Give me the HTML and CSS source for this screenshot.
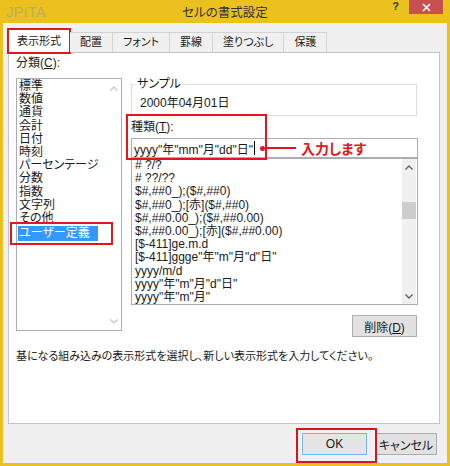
FILE: index.html
```html
<!DOCTYPE html>
<html lang="ja">
<head>
    <meta charset="UTF-8">
    <title>セルの書式設定</title>
    <link rel="stylesheet" href="styles.css">
</head>
<body>
    <div class="window">
        <div class="titlebar">
            <span class="app-name">JPITA</span>
            <span class="title">セルの書式設定</span>
            <div class="title-btns">
                <span class="help">?</span>
                <span class="close">
                    <svg width="9" height="9" viewBox="0 0 9 9"><path d="M1 1L8 8M8 1L1 8" stroke="#fff" stroke-width="1.6"/></svg>
                </span>
            </div>
        </div>

        <div class="dialog">
            <div class="tabs">
                <div class="tab active">表示形式</div>
                <div class="tab">配置</div>
                <div class="tab">フォント</div>
                <div class="tab">罫線</div>
                <div class="tab">塗りつぶし</div>
                <div class="tab">保護</div>
            </div>

            <div class="panel">
                <div class="panel-cols">
                    <div class="col-left">
                        <div class="label">分類(<u>C</u>):</div>
                        <div class="listbox cat-list">
                            <ul class="items">
                                <li>標準</li>
                                <li>数値</li>
                                <li>通貨</li>
                                <li>会計</li>
                                <li>日付</li>
                                <li>時刻</li>
                                <li>パーセンテージ</li>
                                <li>分数</li>
                                <li>指数</li>
                                <li>文字列</li>
                                <li>その他</li>
                                <li class="selected">ユーザー定義</li>
                            </ul>
                            <div class="scrollbar plain">
                                <svg width="8" height="5" viewBox="0 0 8 5"><path d="M0.5 4.5L4 1L7.5 4.5" fill="none" stroke="#c4c4c4" stroke-width="1.2"/></svg>
                                <svg width="8" height="5" viewBox="0 0 8 5"><path d="M0.5 0.5L4 4L7.5 0.5" fill="none" stroke="#c4c4c4" stroke-width="1.2"/></svg>
                            </div>
                        </div>
                    </div>

                    <div class="col-right">
                        <fieldset class="sample">
                            <legend>サンプル</legend>
                            <div>2000年04月01日</div>
                        </fieldset>

                        <div class="type-field">
                            <div class="label">種類(<u>T</u>):</div>
                            <div class="type-input">
                                <span>yyyy"年"mm"月"dd"日"</span>
                                <span class="caret"></span>
                                <span class="callout">
                                    <span class="dot"></span>
                                    <span class="line"></span>
                                    <span class="callout-text">入力します</span>
                                </span>
                            </div>
                        </div>

                        <div class="listbox fmt-list">
                            <ul class="items">
                                <li># ?/?</li>
                                <li># ??/??</li>
                                <li>$#,##0_);($#,##0)</li>
                                <li>$#,##0_);[赤]($#,##0)</li>
                                <li>$#,##0.00_);($#,##0.00)</li>
                                <li>$#,##0.00_);[赤]($#,##0.00)</li>
                                <li>[$-411]ge.m.d</li>
                                <li>[$-411]ggge"年"m"月"d"日"</li>
                                <li>yyyy/m/d</li>
                                <li>yyyy"年"m"月"d"日"</li>
                                <li>yyyy"年"m"月"</li>
                            </ul>
                            <div class="scrollbar">
                                <div class="sb-btn">
                                    <svg width="8" height="5" viewBox="0 0 8 5"><path d="M0.5 4.5L4 1L7.5 4.5" fill="none" stroke="#606060" stroke-width="1.3"/></svg>
                                </div>
                                <div class="sb-track"><div class="sb-thumb"></div></div>
                                <div class="sb-btn">
                                    <svg width="8" height="5" viewBox="0 0 8 5"><path d="M0.5 0.5L4 4L7.5 0.5" fill="none" stroke="#606060" stroke-width="1.3"/></svg>
                                </div>
                            </div>
                        </div>

                        <button class="btn delete">削除(<u>D</u>)</button>
                    </div>
                </div>
                <p class="hint">基になる組み込みの表示形式を選択し、新しい表示形式を入力してください。</p>
            </div>

            <div class="buttons">
                <button class="btn ok">OK</button>
                <button class="btn cancel">キャンセル</button>
            </div>
        </div>
    </div>
</body>
</html>
```

FILE: styles.css
```css
* {
    box-sizing: border-box;
}
body {
    margin: 0;
    font-family: "Liberation Sans", "Noto Sans CJK JP", sans-serif;
    font-size: 12px;
    font-feature-settings: "palt";
    color: #1a1a1a;
    background: #eac11d;
}
.window {
    width: 450px;
    height: 466px;
    display: flex;
    flex-direction: column;
    background: #eac11d;
}
.titlebar {
    height: 23px;
    display: grid;
    grid-template-columns: 1fr auto 1fr;
    align-items: center;
}
.app-name {
    padding-left: 6px;
    font-size: 15px;
    color: #c2ab62;
}
.title {
    font-size: 12.5px;
    color: #333;
}
.title-btns {
    display: flex;
    justify-content: flex-end;
    align-self: start;
    padding-right: 7px;
}
.help {
    font-weight: bold;
    font-size: 11px;
    line-height: 12px;
    color: #333;
    margin-right: 10px;
}
.close {
    width: 34px;
    height: 14px;
    background: #c75050;
    display: flex;
    align-items: center;
    justify-content: center;
}

.dialog {
    flex: 1;
    margin: 0 3px 3px;
    background: #f0f0f0;
    padding: 6px 7px 0 5px;
    display: flex;
    flex-direction: column;
}

/* tabs */
.tabs {
    display: flex;
    align-items: flex-end;
    height: 24px;
    margin-bottom: -1px;
    position: relative;
    z-index: 1;
}
.tab {
    height: 20px;
    margin-bottom: 1px;
    padding: 0 10px;
    font-size: 11px;
    line-height: 19px;
    border: 1px solid #d4d4d4;
    border-bottom: none;
    border-left: none;
    background: #f0f0f0;
}
.tab.active {
    height: 24px;
    margin-bottom: 0;
    line-height: 22px;
    padding: 0 8px;
    background: #fff;
    border: 1px solid #c8c8c8;
    border-bottom: none;
    outline: 2px solid #e3161d;
    outline-offset: -1px;
}

/* panel */
.panel {
    height: 372px;
    background: #fff;
    border: 1px solid #c4c4c4;
    padding: 2px 0 0 7px;
}
.panel-cols {
    display: grid;
    grid-template-columns: 106px 287px;
    column-gap: 9px;
}
.label {
    line-height: 16px;
}
.label u, .btn u {
    text-decoration-thickness: 1px;
}
.listbox {
    display: flex;
    border: 1px solid #abadb3;
    background: #fff;
}
.items {
    list-style: none;
    margin: 0;
    padding: 0;
    flex: 1;
    white-space: nowrap;
}
.items li {
    line-height: 13.2px;
}

.cat-list {
    height: 253px;
    margin-top: 7px;
}
.cat-list .items {
    padding-top: 1px;
}
.cat-list li {
    margin: 0 9px 0 1px;
    padding-left: 1px;
}
.cat-list li.selected {
    position: relative;
    height: 15px;
    line-height: 15px;
    margin-top: 1px;
    background: #3399ff;
    color: #fff;
}
.cat-list li.selected::after {
    content: "";
    position: absolute;
    left: -8px;
    right: -15px;
    top: -4px;
    bottom: -4px;
    border: 2px solid #e3161d;
}
.scrollbar {
    width: 15px;
    display: flex;
    flex-direction: column;
    align-items: center;
}
.scrollbar.plain {
    justify-content: space-between;
    padding: 7px 0 6px;
}

/* right column */
.col-right {
    display: flex;
    flex-direction: column;
}
.sample {
    margin: 22px 1px 0 0;
    padding: 5px 8px;
    border: 1px solid #dcdcdc;
    min-width: 0;
}
.sample legend {
    margin-left: -5px;
    padding: 0 2px;
    line-height: 14px;
}
.sample div {
    line-height: 14px;
}
.type-field {
    position: relative;
    margin-top: 4px;
}
.type-field::after {
    content: "";
    position: absolute;
    left: -5px;
    top: -6px;
    width: 137px;
    bottom: -2px;
    border: 2px solid #e3161d;
}
.type-field .label {
    line-height: 14px;
}
.type-input {
    margin-top: 4px;
    height: 20px;
    border: 1px solid #abadb3;
    padding-left: 2px;
    display: flex;
    align-items: center;
}
.caret {
    width: 1px;
    height: 14px;
    margin-left: 1px;
    background: #000;
}
.callout {
    display: flex;
    align-items: center;
    margin-left: 5px;
}
.dot {
    width: 5px;
    height: 5px;
    border-radius: 50%;
    background: #e3161d;
}
.line {
    width: 31px;
    height: 2px;
    background: #e3161d;
}
.callout-text {
    margin-left: 5px;
    font-size: 14px;
    font-weight: bold;
    color: #e3161d;
}

.fmt-list {
    height: 147px;
}
.fmt-list .items {
    padding-left: 3px;
}
.fmt-list .scrollbar {
    width: 14px;
    margin-right: 1px;
    background: #f0f0f0;
}
.sb-btn {
    height: 16px;
    display: flex;
    align-items: center;
    justify-content: center;
}
.sb-track {
    flex: 1;
    width: 100%;
}
.sb-thumb {
    margin-top: 27px;
    height: 17px;
    background: #cdcdcd;
}

.btn {
    font: inherit;
    font-feature-settings: "palt";
    height: 22px;
    padding: 0;
    color: #1a1a1a;
    background: #e1e1e1;
    border: 1px solid #adadad;
}
.delete {
    width: 65px;
    margin: 10px 1px 0 0;
    align-self: flex-end;
}
.hint {
    margin: 12px 0 0;
    font-size: 11px;
    line-height: 14px;
}

.buttons {
    display: flex;
    justify-content: flex-end;
    gap: 8px;
    padding: 9px 3px 0 0;
}
.ok {
    width: 65px;
    position: relative;
    border-color: #7eb4ea;
    background: #e5e5e5;
}
.ok::after {
    content: "";
    position: absolute;
    left: -7px;
    right: -11px;
    top: -6px;
    bottom: -9px;
    border: 2px solid #d8141c;
}
.cancel {
    width: 62px;
}
```
